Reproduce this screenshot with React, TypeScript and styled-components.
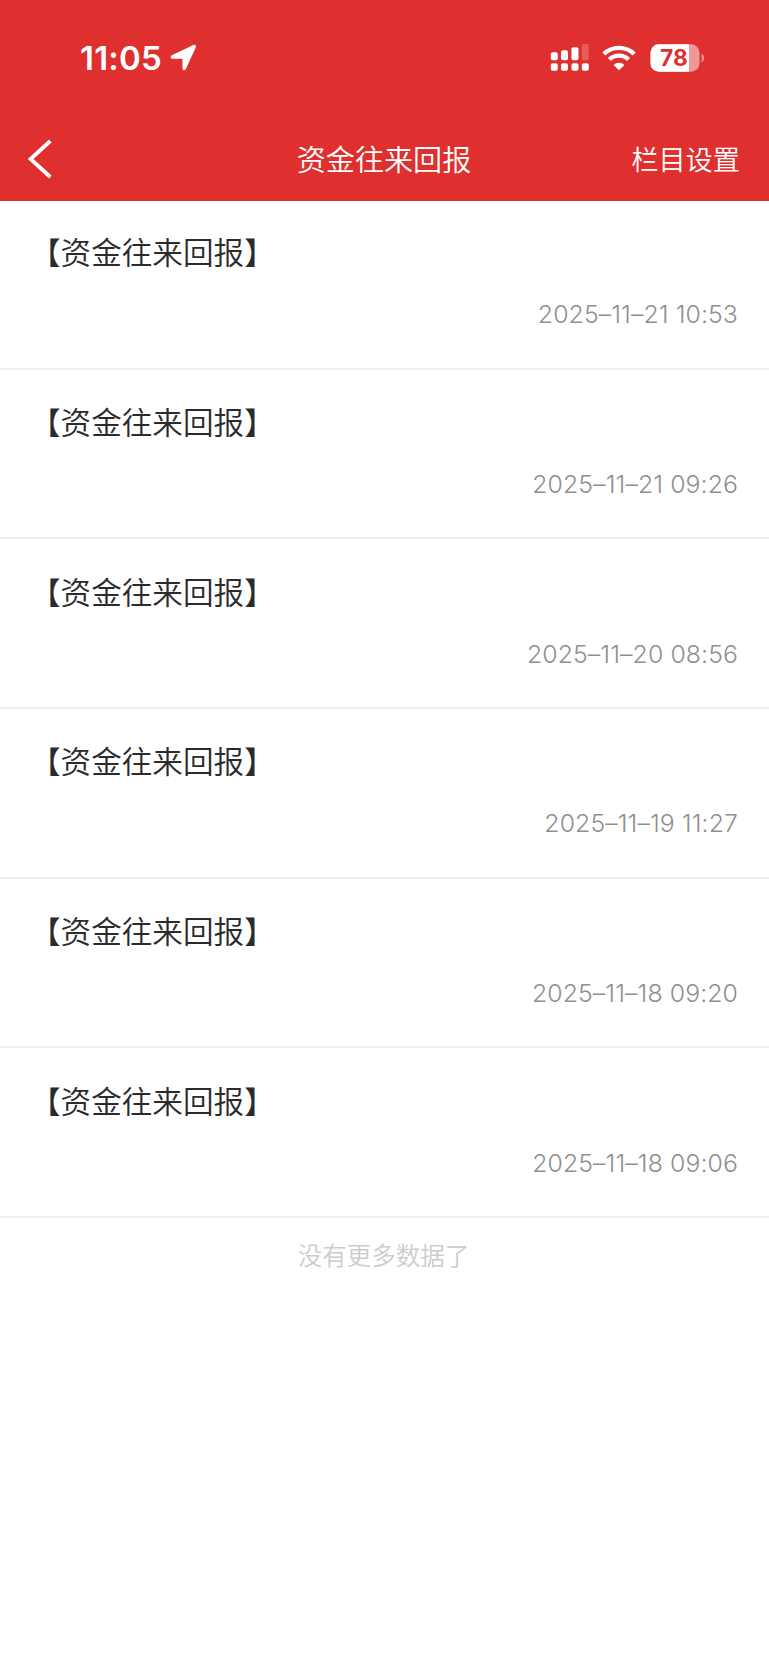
import * as React from 'react'
import styled, { createGlobalStyle, ThemeProvider } from 'styled-components'

const theme = {
  red: '#df302f',
  text: '#2b2b2b',
  muted: '#8f8f8f',
  faint: '#cccccc',
  line: '#efefef',
  gutter: 30,
}

const GlobalStyle = createGlobalStyle`
  * {
    box-sizing: border-box;
  }

  body {
    margin: 0;
    background: #fff;
    font-family: Inter, 'Noto Sans CJK SC', sans-serif;
    -webkit-font-smoothing: antialiased;
  }
`

const Page = styled.div`
  min-height: 1665px;
  background: #fff;
`

const Header = styled.header`
  height: 201px;
  background: ${(props) => props.theme.red};
  color: #fff;
`

const StatusBar = styled.div`
  display: flex;
  justify-content: space-between;
  align-items: center;
  height: 115px;
  padding: 0 64px 0 80px;
`

const StatusGroup = styled.div`
  display: flex;
  align-items: center;
`

const Clock = styled.span`
  font-size: 33px;
  line-height: 40px;
  font-weight: 600;
  letter-spacing: 0.2px;
`

const NavBar = styled.nav`
  display: grid;
  grid-template-columns: 1fr auto 1fr;
  align-items: center;
  height: 86px;
  padding: 0 29px 0 28px;
`

const BackButton = styled.button`
  display: flex;
  padding: 2px 0 0;
  border: 0;
  background: none;
  color: inherit;
`

const NavTitle = styled.h1`
  margin: 0;
  font-family: 'Noto Sans CJK SC', sans-serif;
  font-size: 29.1px;
  line-height: 44px;
  font-weight: 350;
`

const NavAction = styled.button`
  justify-self: end;
  padding: 0;
  border: 0;
  background: none;
  color: inherit;
  font-family: 'Noto Sans CJK SC', sans-serif;
  font-size: 27.2px;
  line-height: 40px;
  font-weight: 350;
`

const List = styled.ul`
  margin: 0;
  padding: 0;
  list-style: none;
`

const Row = styled.li`
  display: flex;
  flex-direction: column;
  height: 169.7px;
  padding: 29.4px ${(props) => props.theme.gutter}px 0;
  border-bottom: 2px solid ${(props) => props.theme.line};

  &:first-child {
    height: 168.7px;
    padding-top: 28px;
  }
`

const RowTitle = styled.div`
  font-family: 'Noto Sans CJK SC', sans-serif;
  font-size: 30.6px;
  line-height: 44px;
  font-weight: 350;
  color: ${(props) => props.theme.text};
`

const RowDate = styled.time`
  align-self: flex-end;
  margin-top: 25px;
  padding-right: 1px;
  font-size: 24.8px;
  line-height: 32px;
  font-weight: 300;
  letter-spacing: 0.1px;
  /* keeps dashes and colons at text height between digits */
  font-feature-settings: 'calt' 0;
  color: ${(props) => props.theme.muted};
`

const ListEnd = styled.div`
  padding: 17px 2px 0 0;
  font-family: 'Noto Sans CJK SC', sans-serif;
  font-size: 24.5px;
  line-height: 40px;
  font-weight: 350;
  text-align: center;
  color: ${(props) => props.theme.faint};
`

const LocationIcon = styled.svg`
  margin-left: 8px;
`

const WifiIcon = styled.svg`
  margin: 0 14px 0 13px;
`

const items = [
  '2025–11–21 10:53',
  '2025–11–21 09:26',
  '2025–11–20 08:56',
  '2025–11–19 11:27',
  '2025–11–18 09:20',
  '2025–11–18 09:06',
]

const Signal: React.FC = () => (
  <svg width="39" height="28" viewBox="0 0 39 28" fill="#fff">
    <rect x="0.8" y="8.2" width="7" height="8" rx="2" />
    <rect x="11" y="6.2" width="7" height="10" rx="2" />
    <rect x="21.5" y="3.2" width="7" height="13" rx="2" />
    <rect x="31.8" y="0" width="7" height="16.2" rx="2" opacity="0.22" />
    {[0.8, 11, 21.5, 31.8].map((x) => (
      <rect key={x} x={x} y="19.2" width="7" height="7.5" rx="2" />
    ))}
  </svg>
)

const Wifi: React.FC = () => (
  <WifiIcon width="34" height="26" viewBox="0 0 34 26" fill="none">
    <path d="M1.9 8.9C10.2.8 23.8.8 32.1 8.9" stroke="#fff" strokeWidth="4.2" />
    <path d="M7.4 14.6c5.2-5.2 14-5.2 19.2 0" stroke="#fff" strokeWidth="4.2" />
    <path d="M17 25.2l-5.4-5.3c3-2.8 7.8-2.8 10.8 0z" fill="#fff" />
  </WifiIcon>
)

const Battery: React.FC = () => (
  <svg width="55" height="28" viewBox="0 0 55 28">
    <clipPath id="battery">
      <rect x="0.5" y="0.3" width="49" height="27.4" rx="8.5" />
    </clipPath>
    <g clipPath="url(#battery)">
      <rect width="50" height="28" fill="#fff" opacity="0.5" />
      <rect width="39" height="28" fill="#fff" />
    </g>
    <path d="M51.6 9.8c3.4 1.2 3.4 7.2 0 8.4z" fill="#fff" opacity="0.5" />
    <text
      x="24"
      y="22"
      textAnchor="middle"
      fontFamily="Inter, sans-serif"
      fontSize="22.8"
      fontWeight="700"
      fill={theme.red}
    >
      78
    </text>
  </svg>
)

const App: React.FC = () => {
  return (
    <ThemeProvider theme={theme}>
      <GlobalStyle />
      <Page>
        <Header>
          <StatusBar>
            <StatusGroup>
              <Clock>11:05</Clock>
              <LocationIcon width="27" height="27" viewBox="0 0 27 27" fill="#fff">
                <path d="M1.8 11.2 23.3.9c1.7-.8 3.2.6 2.5 2.3l-9.9 21.8c-.8 1.8-3.4 1.4-3.4-.6l-.1-8.9c0-.5-.2-.7-.7-.7l-9.3-.1c-2 0-2.4-2.6-.6-3.5z" />
              </LocationIcon>
            </StatusGroup>
            <StatusGroup>
              <Signal />
              <Wifi />
              <Battery />
            </StatusGroup>
          </StatusBar>
          <NavBar>
            <BackButton aria-label="返回">
              <svg width="25" height="40" viewBox="0 0 25 40" fill="none">
                <path d="M22.3 2 2.6 20l19.7 18" stroke="#fff" strokeWidth="3.8" />
              </svg>
            </BackButton>
            <NavTitle>资金往来回报</NavTitle>
            <NavAction>栏目设置</NavAction>
          </NavBar>
        </Header>
        <List>
          {items.map((date) => (
            <Row key={date}>
              <RowTitle>【资金往来回报】</RowTitle>
              <RowDate>{date}</RowDate>
            </Row>
          ))}
        </List>
        <ListEnd>没有更多数据了</ListEnd>
      </Page>
    </ThemeProvider>
  )
}

export default App
